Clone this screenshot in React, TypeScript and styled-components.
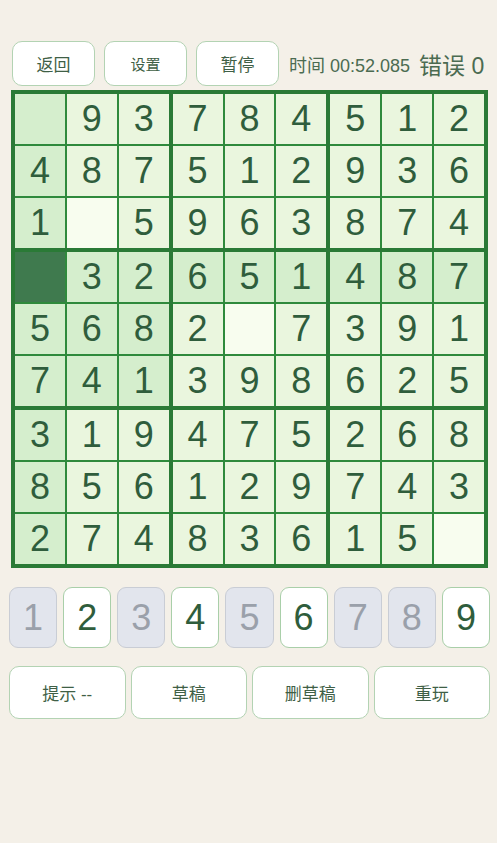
import React from "react";
import styled, { createGlobalStyle } from "styled-components";

const Global = createGlobalStyle`
  html, body { margin: 0; padding: 0; background: #f4f0e8; }
  body { font-family: "Liberation Sans", "Noto Sans CJK SC", sans-serif; }
`;

const Page = styled.div`
  width: 497px;
  min-height: 843px;
  background: #f4f0e8;
  padding-top: 41px;
  box-sizing: border-box;
`;

const TopBar = styled.div`
  display: flex;
  align-items: center;
  padding-left: 12px;
  gap: 9px;
  height: 45px;
`;

const TopButton = styled.button<{ $size?: number }>`
  width: 83px;
  height: 45px;
  border-radius: 10px;
  border: 1.5px solid #b3d3b3;
  background: #ffffff;
  color: #3f5f46;
  font-family: "Noto Sans CJK SC", sans-serif;
  font-size: ${(p) => p.$size ?? 17}px;
  padding: 0;
  box-sizing: border-box;
`;

const Timer = styled.span`
  margin-left: 1px;
  color: #4b6b51;
  font-size: 18px;
  font-family: "Liberation Sans", "Noto Sans CJK SC", sans-serif;
  white-space: nowrap;
`;

const Errors = styled.span`
  margin-left: 0px;
  color: #4b6b51;
  font-size: 23px;
  font-family: "Liberation Sans", "Noto Sans CJK SC", sans-serif;
  white-space: nowrap;
`;

const Board = styled.div`
  margin: 4px 0 0 11px;
  width: 477px;
  height: 478px;
  box-sizing: border-box;
  padding: 4px;
  background: #2a7a36;
  display: grid;
  grid-template-columns: repeat(3, 1fr);
  grid-template-rows: repeat(3, 1fr);
  gap: 4px;
`;

const Box = styled.div`
  display: grid;
  grid-template-columns: repeat(3, 1fr);
  grid-template-rows: repeat(3, 1fr);
  gap: 2px;
  background: #2f8a3c;
`;

type CellKind = "normal" | "hl" | "sel" | "empty";

const cellBg: Record<CellKind, string> = {
  normal: "#eaf6de",
  hl: "#d5eecd",
  sel: "#3f7a4e",
  empty: "#f8fdef",
};

const Cell = styled.div<{ $kind: CellKind }>`
  background: ${(p) => cellBg[p.$kind]};
  display: flex;
  align-items: center;
  justify-content: center;
  color: #2f5d3c;
  font-size: 36px;
  font-family: "Liberation Sans", sans-serif;
  line-height: 1;
`;

const Pad = styled.div`
  margin: 19px 0 0 9px;
  width: 481px;
  display: grid;
  grid-template-columns: repeat(9, 1fr);
  gap: 6px;
`;

const PadKey = styled.button<{ $off: boolean }>`
  height: 61px;
  border-radius: 9px;
  box-sizing: border-box;
  padding: 0;
  border: 1.5px solid ${(p) => (p.$off ? "#c9cdd5" : "#a9cfa9")};
  background: ${(p) => (p.$off ? "#e2e5ed" : "#ffffff")};
  color: ${(p) => (p.$off ? "#9aa0aa" : "#2f5d3c")};
  font-size: 36px;
  font-family: "Liberation Sans", sans-serif;
`;

const Actions = styled.div`
  margin: 18px 0 0 9px;
  width: 481px;
  display: grid;
  grid-template-columns: repeat(4, 1fr);
  gap: 5px;
`;

const ActionButton = styled.button`
  height: 53px;
  border-radius: 10px;
  box-sizing: border-box;
  padding: 0;
  border: 1.5px solid #b3d3b3;
  background: #ffffff;
  color: #3f5f46;
  font-size: 17px;
  font-family: "Liberation Sans", "Noto Sans CJK SC", sans-serif;
`;

const board = [
  "093784512",
  "487512936",
  "105963874",
  "032651487",
  "568207391",
  "741398625",
  "319475268",
  "856129743",
  "274836150",
];

const SEL_R = 3;
const SEL_C = 0;

function kindOf(r: number, c: number): CellKind {
  if (r === SEL_R && c === SEL_C) return "sel";
  const related =
    r === SEL_R ||
    c === SEL_C ||
    (Math.floor(r / 3) === Math.floor(SEL_R / 3) && Math.floor(c / 3) === Math.floor(SEL_C / 3));
  if (related) return "hl";
  if (board[r][c] === "0") return "empty";
  return "normal";
}

const disabled = new Set([1, 3, 5, 7, 8]);

export default function App() {
  return (
    <Page>
      <Global />
      <TopBar>
        <TopButton>返回</TopButton>
        <TopButton $size={15}>设置</TopButton>
        <TopButton>暂停</TopButton>
        <Timer>时间 00:52.085</Timer>
        <Errors>错误 0</Errors>
      </TopBar>
      <Board>
        {Array.from({ length: 9 }, (_, b) => {
          const br = Math.floor(b / 3) * 3;
          const bc = (b % 3) * 3;
          return (
            <Box key={b}>
              {Array.from({ length: 9 }, (_, i) => {
                const r = br + Math.floor(i / 3);
                const c = bc + (i % 3);
                const v = board[r][c];
                return (
                  <Cell key={i} $kind={kindOf(r, c)}>
                    {v === "0" ? "" : v}
                  </Cell>
                );
              })}
            </Box>
          );
        })}
      </Board>
      <Pad>
        {Array.from({ length: 9 }, (_, i) => (
          <PadKey key={i} $off={disabled.has(i + 1)}>
            {i + 1}
          </PadKey>
        ))}
      </Pad>
      <Actions>
        <ActionButton>提示 --</ActionButton>
        <ActionButton>草稿</ActionButton>
        <ActionButton>删草稿</ActionButton>
        <ActionButton>重玩</ActionButton>
      </Actions>
    </Page>
  );
}
